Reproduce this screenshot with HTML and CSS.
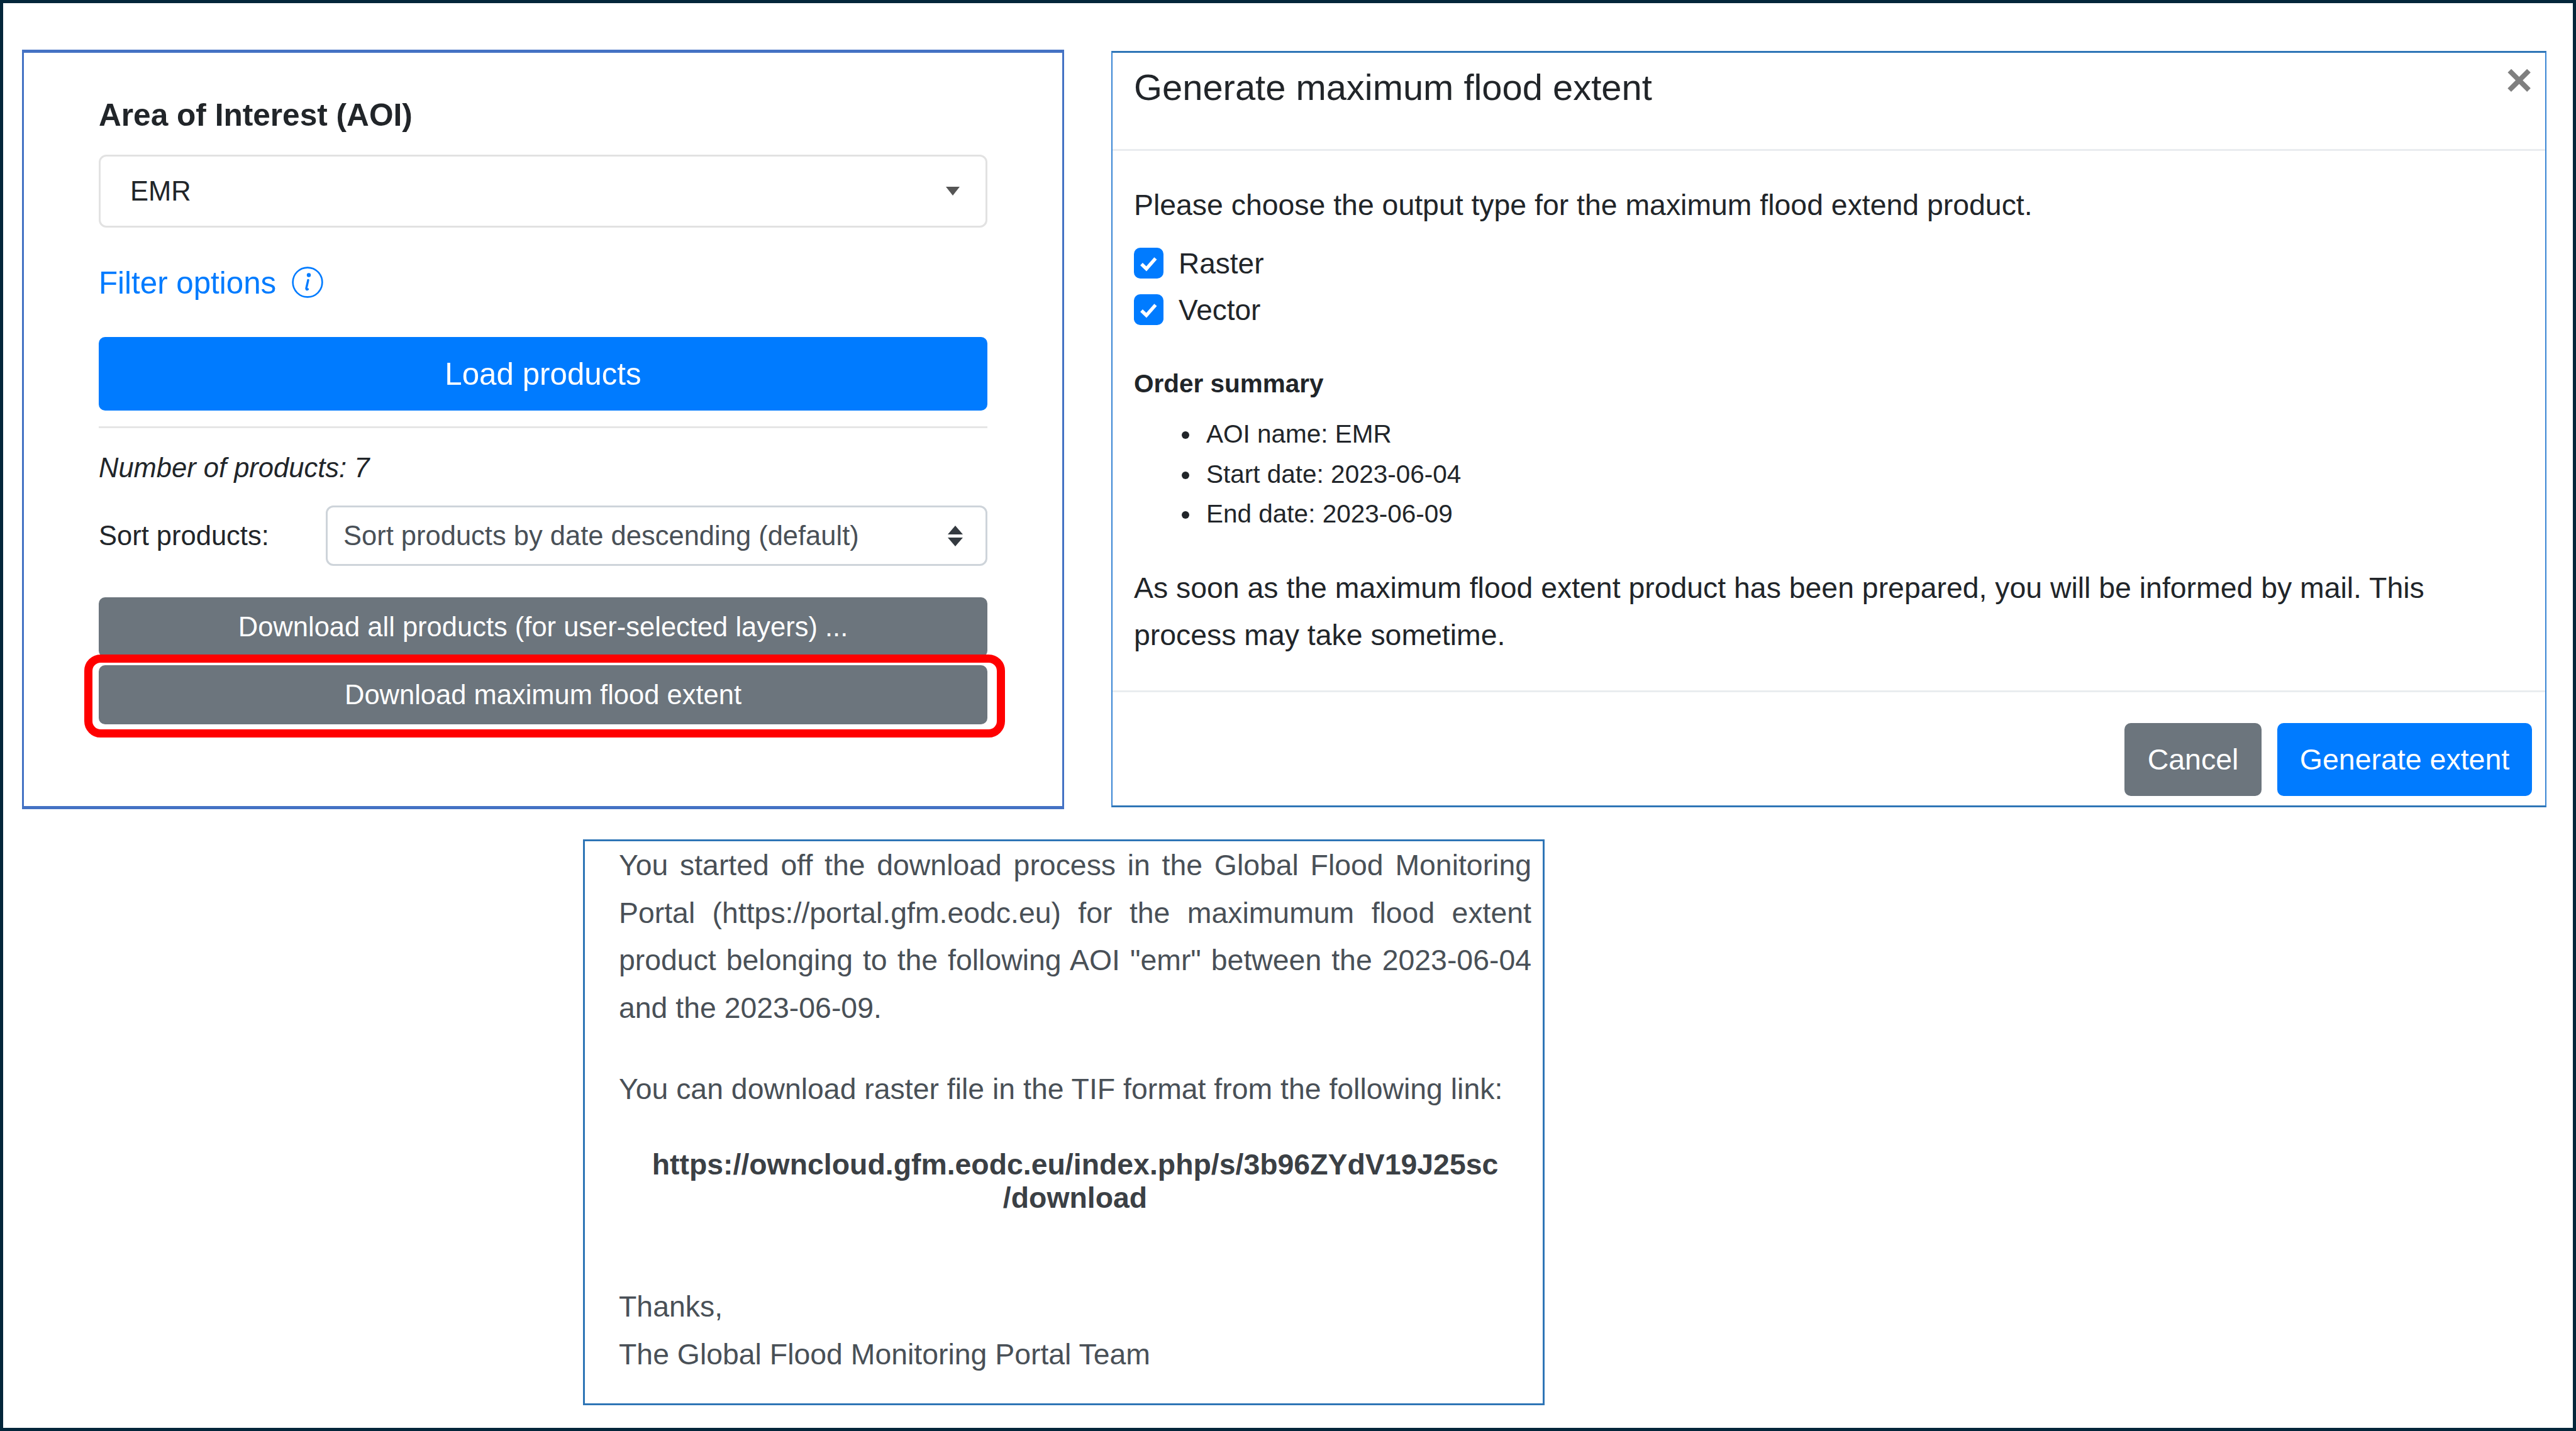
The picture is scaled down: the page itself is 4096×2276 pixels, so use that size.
FILE: index.html
```html
<!DOCTYPE html>
<html lang="en">
<head>
<meta charset="utf-8">
<title>Generate maximum flood extent</title>
<link rel="stylesheet" href="styles.css">
</head>
<body>
<main class="frame">
  <section class="panel filter-panel">
    <h2 class="aoi-title">Area of Interest (AOI)</h2>
    <div class="select aoi-select">
      <span>EMR</span>
      <svg class="caret" viewBox="0 0 22 14"><path d="M0 0H22L11 14Z"/></svg>
    </div>
    <div class="filter-link">
      <span>Filter options</span>
      <svg class="info" viewBox="0 0 50 50"><circle cx="25" cy="25" r="23.4" fill="none" stroke="#007bff" stroke-width="2.6"/><circle cx="27" cy="13.5" r="3.2" fill="#007bff"/><path d="M26 21.5 23 34.5Q22.600 37.500 25.500 36" fill="none" stroke="#007bff" stroke-width="3.400" stroke-linecap="round"/></svg>
    </div>
    <div class="btn btn-primary load-btn">Load products</div>
    <hr class="rule">
    <p class="count">Number of products: 7</p>
    <div class="sort-row">
      <span class="sort-label">Sort products:</span>
      <div class="select sort-select">
        <span>Sort products by date descending (default)</span>
        <svg class="updown" viewBox="0 0 24 33"><path d="M12 0 24 14H0ZM0 19H24L12 33Z"/></svg>
      </div>
    </div>
    <div class="btn btn-secondary dl-all">Download all products (for user-selected layers) ...</div>
    <div class="dl-max-wrap">
      <div class="btn btn-secondary dl-max">Download maximum flood extent</div>
      <div class="highlight"></div>
    </div>
  </section>

  <section class="panel modal">
    <header class="modal-head">
      <h1 class="modal-title">Generate maximum flood extent</h1>
      <span class="close">×</span>
    </header>
    <div class="modal-body">
      <p class="intro">Please choose the output type for the maximum flood extend product.</p>
      <div class="checks">
        <label class="check">
          <svg class="box" viewBox="0 0 47 49"><rect width="47" height="49" rx="10" fill="#007bff"/><path d="M12 26 19.800 33.500 34.400 17" fill="none" stroke="#fff" stroke-width="5.500"/></svg>
          <span>Raster</span>
        </label>
        <label class="check">
          <svg class="box" viewBox="0 0 47 49"><rect width="47" height="49" rx="10" fill="#007bff"/><path d="M12 26 19.800 33.500 34.400 17" fill="none" stroke="#fff" stroke-width="5.500"/></svg>
          <span>Vector</span>
        </label>
      </div>
      <h3 class="summary-title">Order summary</h3>
      <ul class="summary">
        <li>AOI name: EMR</li>
        <li>Start date: 2023-06-04</li>
        <li>End date: 2023-06-09</li>
      </ul>
      <p class="note">As soon as the maximum flood extent product has been prepared, you will be informed by mail. This process may take sometime.</p>
    </div>
    <footer class="modal-foot">
      <div class="btn btn-secondary foot-btn cancel">Cancel</div>
      <div class="btn btn-primary foot-btn generate">Generate extent</div>
    </footer>
  </section>

  <section class="panel mail">
    <p class="mail-lead">You started off the download process in the Global Flood Monitoring Portal (https://portal.gfm.eodc.eu) for the maximumum flood extent product belonging to the following AOI "emr" between the 2023-06-04 and the 2023-06-09.</p>
    <p class="mail-line">You can download raster file in the TIF format from the following link:</p>
    <p class="mail-link">https://owncloud.gfm.eodc.eu/index.php/s/3b96ZYdV19J25sc<br>/download</p>
    <p class="mail-sign">Thanks,<br>The Global Flood Monitoring Portal Team</p>
  </section>
</main>
</body>
</html>
```
FILE: styles.css
```css
* { box-sizing: border-box; }
html, body { margin: 0; padding: 0; }
body { background: #fff; font-family: "Liberation Sans", Arial, sans-serif; color: #212529; }
p, h1, h2, h3, ul { margin: 0; padding: 0; font-weight: normal; }

.frame {
  width: 4096px;
  height: 2276px;
  border: 5px solid #03263a;
  padding: 74px 0 0 30px;
  display: grid;
  grid-template-columns: 1657px 2282px;
  grid-template-rows: 1208px 900px;
  column-gap: 75px;
  row-gap: 48px;
  align-content: start;
  overflow: hidden;
}
.panel { background: #fff; }

/* shared controls */
.btn {
  display: flex;
  align-items: center;
  justify-content: center;
  color: #fff;
  border-radius: 10px;
  white-space: nowrap;
}
.btn-primary { background: #007bff; }
.btn-secondary { background: #6c757d; }
.select {
  display: flex;
  align-items: center;
  justify-content: space-between;
  background: #fff;
  border-radius: 12px;
}

/* left panel */
.filter-panel {
  border: 3.500px solid #4472c4;
  border-top-width: 5px;
  border-bottom-width: 5px;
  padding: 69px 119px 0;
}
.aoi-title { font-size: 49.600px; font-weight: bold; line-height: 60px; color: #212529; }
.aoi-select {
  height: 116px;
  margin-top: 33px;
  padding: 0 41px 0 47px;
  border: 3px solid #e2e2e2;
  font-size: 43.500px;
}
.caret { width: 22px; height: 14px; fill: #555; }
.filter-link {
  display: flex;
  align-items: center;
  gap: 25px;
  height: 60px;
  margin-top: 57px;
  font-size: 49.300px;
  color: #007bff;
}
.info { width: 50px; height: 50px; }
.load-btn { height: 117px; margin-top: 57px; font-size: 49.300px; }
.rule { height: 3px; margin: 25px 0 0; border: 0; background: #e6e6e6; }
.count { margin-top: 35px; font-size: 43.500px; line-height: 56px; font-style: italic; color: #212529; }
.sort-row { display: flex; align-items: center; height: 96px; margin-top: 32px; font-size: 43.500px; }
.sort-label { flex: 0 0 361px; }
.sort-select {
  flex: 1;
  height: 96px;
  padding: 0 36px 0 25px;
  border: 3px solid #ced4da;
  color: #495057;
}
.updown { width: 24px; height: 33px; fill: #343a40; }
.dl-all { height: 95px; margin-top: 50px; font-size: 43.500px; }
.dl-max-wrap { position: relative; margin-top: 13px; }
.dl-max { height: 94px; font-size: 43.500px; }
.highlight {
  position: absolute;
  top: -17px;
  right: -28px;
  bottom: -21px;
  left: -23px;
  border: 13px solid #ff0000;
  border-radius: 26px;
}

/* modal */
.modal {
  display: flex;
  flex-direction: column;
  margin: 2px 0 3px;
  border: 2.500px solid #3a86d4;
  border-top: 3px solid #2e75b6;
  border-bottom: 3px solid #2e75b6;
}
.modal-head {
  position: relative;
  height: 156px;
  padding-left: 34px;
  border-bottom: 3px solid #e9ecef;
}
.modal-title { font-size: 57.900px; line-height: 70px; padding-top: 20px; color: #212529; }
.close {
  position: absolute;
  top: 1px;
  right: 20px;
  font-size: 73px;
  line-height: 84px;
  font-weight: bold;
  color: #7f7f7f;
}
.modal-body { padding: 0 34px; }
.intro { margin-top: 56px; font-size: 46.400px; line-height: 60px; }
.checks { display: flex; flex-direction: column; gap: 25px; margin-top: 38px; }
.check { display: flex; align-items: center; gap: 24px; height: 49px; font-size: 46px; }
.box { width: 47px; height: 49px; flex: none; }
.summary-title { margin-top: 68px; font-size: 40.500px; line-height: 50px; font-weight: bold; }
.summary { margin-top: 24px; padding-left: 107px; font-size: 40.500px; line-height: 63.500px; }
.summary li { padding-left: 8px; }
.note { margin-top: 48px; font-size: 46.400px; line-height: 75px; }
.modal-foot {
  display: flex;
  justify-content: flex-end;
  gap: 25px;
  margin-top: 50px;
  padding: 49px 21px 0 0;
  border-top: 3px solid #e9ecef;
}
.foot-btn { height: 116px; font-size: 46.500px; }
.cancel { width: 218px; }
.generate { width: 405px; }

/* mail */
.mail {
  grid-column: 1 / -1;
  width: 1529px;
  margin-left: 892px;
  padding: 1px 18px 0 54px;
  border: 3px solid #2e75b6;
  color: #495057;
  font-size: 46.400px;
  line-height: 75.500px;
}
.mail-lead { text-align: justify; }
.mail-line { margin-top: 54px; }
.mail-link { margin-top: 55px; font-weight: bold; line-height: 53px; text-align: center; color: #3b4045; }
.mail-sign { margin-top: 108px; line-height: 76px; }
```
